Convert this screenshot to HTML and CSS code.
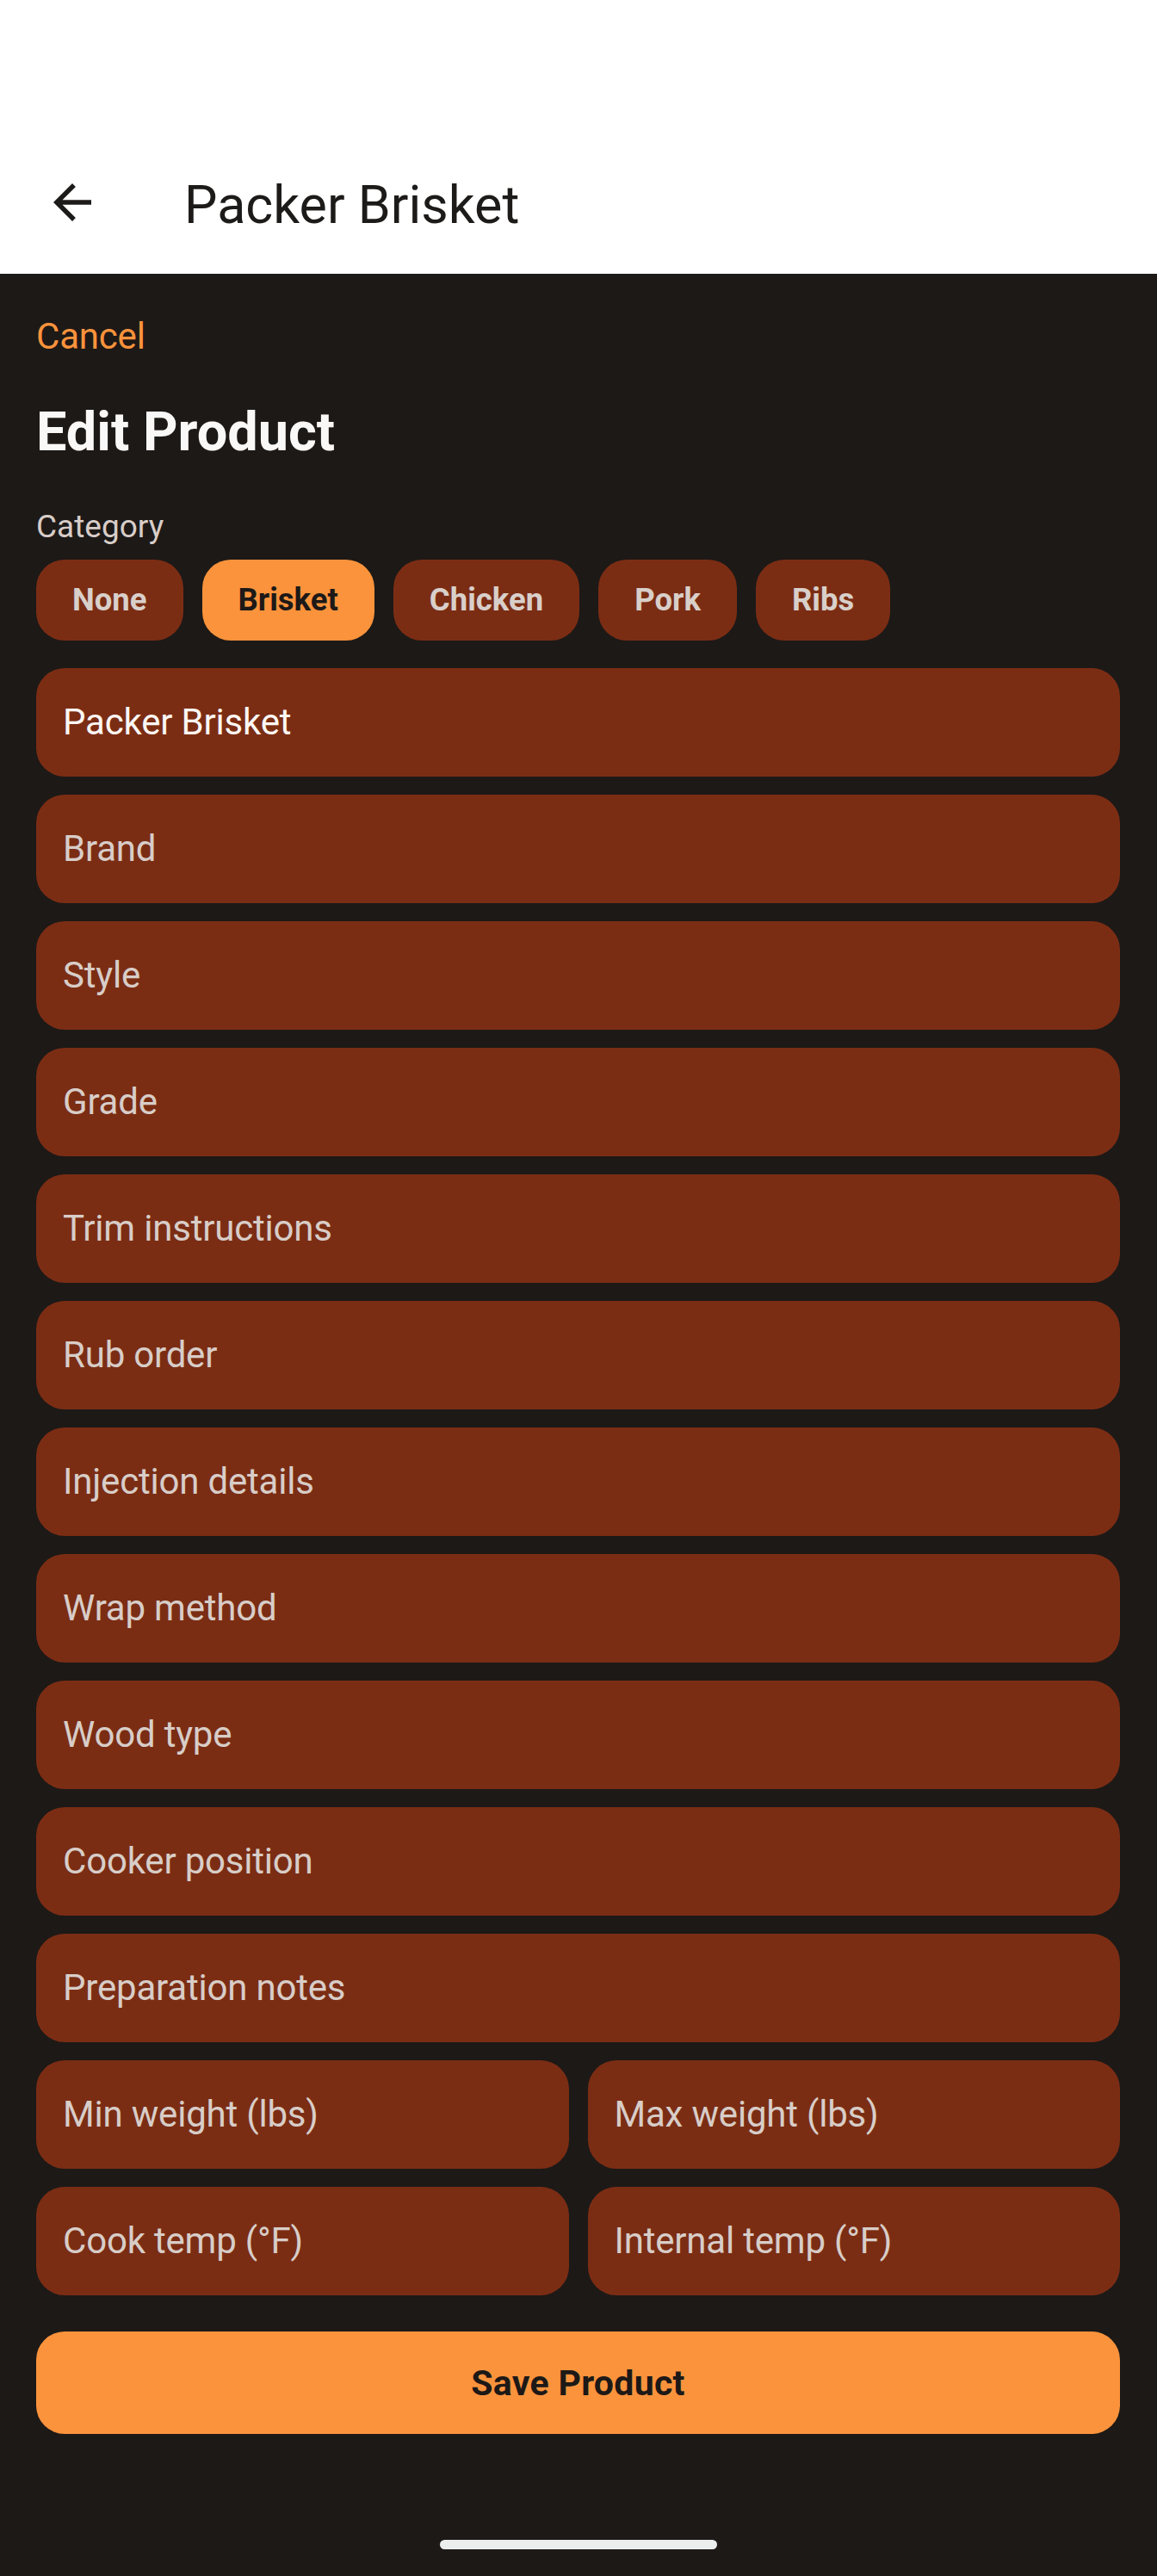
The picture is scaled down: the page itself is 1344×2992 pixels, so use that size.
FILE: index.html
```html
<!DOCTYPE html>
<html lang="en">
<head>
<meta charset="utf-8">
<title>Packer Brisket</title>
<link rel="stylesheet" href="styles.css">
</head>
<body>
<header class="appbar">
  <div class="toolbar">
    <button class="back" aria-label="Back">
      <svg viewBox="0 0 24 24" width="66" height="66"><path d="M20 11H7.83l5.59-5.59L12 4l-8 8 8 8 1.41-1.41L7.83 13H20v-2z" fill="#1d1b1a"/></svg>
    </button>
    <h1 class="title">Packer Brisket</h1>
  </div>
</header>
<main class="content">
  <div class="cancel">Cancel</div>
  <h2 class="heading">Edit Product</h2>
  <div class="label">Category</div>
  <div class="chips">
    <span class="chip">None</span>
    <span class="chip selected">Brisket</span>
    <span class="chip">Chicken</span>
    <span class="chip">Pork</span>
    <span class="chip">Ribs</span>
  </div>
  <div class="fields">
    <div class="field value">Packer Brisket</div>
    <div class="field">Brand</div>
    <div class="field">Style</div>
    <div class="field">Grade</div>
    <div class="field">Trim instructions</div>
    <div class="field">Rub order</div>
    <div class="field">Injection details</div>
    <div class="field">Wrap method</div>
    <div class="field">Wood type</div>
    <div class="field">Cooker position</div>
    <div class="field">Preparation notes</div>
    <div class="pair">
      <div class="field">Min weight (lbs)</div>
      <div class="field">Max weight (lbs)</div>
    </div>
    <div class="pair">
      <div class="field">Cook temp (°F)</div>
      <div class="field">Internal temp (°F)</div>
    </div>
  </div>
  <button class="save">Save Product</button>
  <div class="home-bar"><span class="handle"></span></div>
</main>
</body>
</html>
```
FILE: styles.css
```css
* { box-sizing: border-box; }
html, body { margin: 0; padding: 0; }
body {
  background: #1d1917;
  font-family: Roboto, "Noto Sans", sans-serif;
  width: 1344px;
  min-height: 2992px;
}
.appbar {
  background: #ffffff;
  height: 318px;
  padding-top: 152px;
}
.toolbar {
  height: 166px;
  display: flex;
  align-items: center;
}
.back {
  border: 0;
  background: none;
  padding: 0;
  margin-left: 51px;
  width: 66px;
  height: 66px;
  display: block;
}
.back svg { display: block; }
.title {
  margin: 5px 0 0 97px;
  font-size: 61px;
  line-height: 60px;
  font-weight: 400;
  color: #1d1b1a;
}
.content {
  padding: 0 43px 0 42px;
}
.cancel {
  margin-top: 51px;
  font-size: 42px;
  line-height: 44px;
  letter-spacing: -0.2px;
  color: #fa933c;
}
.heading {
  margin: 57px 0 0;
  font-size: 63px;
  line-height: 64px;
  font-weight: 700;
  color: #faf8f6;
}
.label {
  margin-top: 59px;
  font-size: 37px;
  line-height: 38px;
  color: #d8cdc8;
}
.chips {
  margin-top: 19px;
  display: flex;
  gap: 22px;
}
.chip {
  height: 94px;
  padding: 0 42px;
  border-radius: 33px;
  background: #7b2d14;
  color: #d9cfca;
  font-size: 36.5px;
  line-height: 38px;
  font-weight: 700;
  display: flex;
  align-items: center;
}
.chip.selected {
  background: #fa933c;
  color: #1d1917;
}
.fields {
  margin-top: 32px;
  display: flex;
  flex-direction: column;
  gap: 21px;
}
.field {
  height: 126px;
  border-radius: 33px;
  background: #7b2d14;
  padding-left: 31px;
  display: flex;
  align-items: center;
  font-size: 42px;
  line-height: 44px;
  letter-spacing: -0.2px;
  color: #d8cdc8;
}
.field.value { color: #fbf7f4; }
.pair {
  display: grid;
  grid-template-columns: 1fr 1fr;
  gap: 22px;
}
.save {
  margin-top: 42px;
  width: 100%;
  height: 119px;
  border: 0;
  border-radius: 33px;
  background: #fa933c;
  color: #1d1917;
  font-family: Roboto, "Noto Sans", sans-serif;
  font-size: 41px;
  letter-spacing: 0.3px;
  font-weight: 700;
  display: block;
}
.home-bar {
  display: flex;
  justify-content: center;
  padding-top: 123px;
}
.handle {
  width: 322px;
  height: 11px;
  border-radius: 6px;
  background: #eceeee;
}
```
